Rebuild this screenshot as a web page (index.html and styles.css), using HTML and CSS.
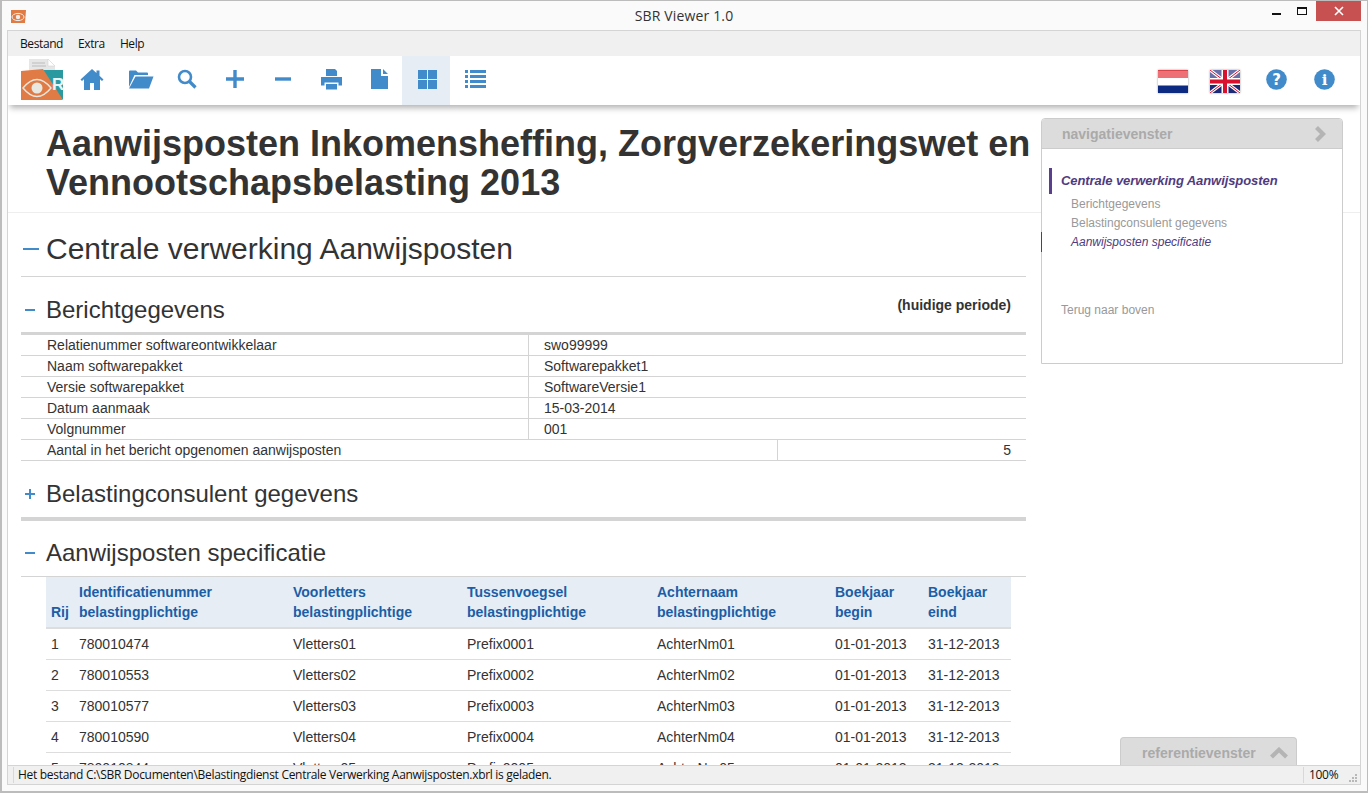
FILE: index.html
```html
<!DOCTYPE html>
<html lang="nl">
<head>
<meta charset="utf-8">
<title>SBR Viewer 1.0</title>
<link rel="stylesheet" href="styles.css">
</head>
<body>
<div class="window">
  <header class="titlebar">
    <svg class="appicon" viewBox="0 0 16 16" width="16" height="16"><path d="M1 2h15l-1 13H1z" fill="#e07b45"/><ellipse cx="8" cy="9" rx="6" ry="3.6" fill="none" stroke="#eee" stroke-width="1"/><circle cx="8" cy="9" r="2.2" fill="#eee"/></svg>
    <div class="wintitle">SBR Viewer 1.0</div>
    <div class="winctrls">
      <div class="ctl"><span class="ctl-min"></span></div>
      <div class="ctl"><span class="ctl-max"></span></div>
      <div class="ctl ctl-close"><svg viewBox="0 0 10 10" width="10" height="10"><path d="M1 1l8 8M9 1l-8 8" stroke="#fff" stroke-width="1.6"/></svg></div>
    </div>
  </header>
  <div class="client">
    <nav class="menubar"><span>Bestand</span><span>Extra</span><span>Help</span></nav>
    <div class="toolbar">
      <svg class="logo" viewBox="0 0 44 44" width="44" height="44">
        <path d="M8 1h19l7 7v8H8z" fill="#e6e6e6"/><path d="M27 1l7 7h-7z" fill="#fff" stroke="#ccc" stroke-width=".5"/>
        <path d="M11 5h13M11 8h14" stroke="#bbb" stroke-width="1.2"/>
        <rect x="22" y="12" width="20" height="29" fill="#2a9aa0"/>
        <path d="M0 13l22-2 20 31H0z" fill="#e07b45"/>
        <text x="31" y="32" class="logo-r">R</text>
        <path d="M2 30q14-17 28 0q-14 17-28 0z" fill="none" stroke="#e8e8e0" stroke-width="1.400"/>
        <circle cx="16" cy="30" r="5.500" fill="#e8e8e0"/>
      </svg>
      <div class="tool tool-home"><svg viewBox="0 0 24 22" width="24" height="22"><path d="M12 1L.5 11.500 2 13l2-1.700V22h6v-7h4v7h6V11.300L22 13l1.500-1.500-4-3.700V2.500h-3v2.500z" fill="#428bca"/></svg></div>
      <div class="tool tool-folder"><svg viewBox="0 0 26 20" width="26" height="20"><path d="M1 18V2.500q0-1 1-1h6l2 2h9q1 0 1 1V6H6.500z" fill="#428bca"/><path d="M7.500 7.500H25.500L21 19.500H1z" fill="#428bca"/></svg></div>
      <div class="tool"><svg viewBox="0 0 20 20" width="20" height="20"><circle cx="8" cy="8" r="6" fill="none" stroke="#428bca" stroke-width="2.600"/><path d="M12.500 12.500l6 6" stroke="#428bca" stroke-width="3.200"/></svg></div>
      <div class="tool"><svg viewBox="0 0 18 18" width="18" height="18"><path d="M9 0v18M0 9h18" stroke="#428bca" stroke-width="3.400"/></svg></div>
      <div class="tool"><svg viewBox="0 0 16 4" width="16" height="4"><path d="M0 2h16" stroke="#428bca" stroke-width="3.400"/></svg></div>
      <div class="tool"><svg viewBox="0 0 21 21" width="21" height="21"><path d="M5 0h9l2 2v5H5zM0 8h21v8.500h-3.500v-3h-14v3H0zM5 15h11v5.500H5z" fill="#428bca"/></svg></div>
      <div class="tool"><svg viewBox="0 0 17 20" width="17" height="20"><path d="M0 0h10v7h7v13H0zM12 0l5 5h-5z" fill="#428bca"/></svg></div>
      <div class="tool tool-on"><svg viewBox="0 0 19 19" width="19" height="19"><path d="M0 0h9v9H0zM10 0h9v9h-9zM0 10h9v9H0zM10 10h9v9h-9z" fill="#428bca"/></svg></div>
      <div class="tool"><svg viewBox="0 0 21 18" width="21" height="18"><path d="M0 0h3v3H0zM5 0h16v3H5zM0 5h3v3H0zM5 5h16v3H5zM0 10h3v3H0zM5 10h16v3H5zM0 15h3v3H0zM5 15h16v3H5z" fill="#428bca"/></svg></div>
      <div class="tool-right">
        <svg class="flag" viewBox="0 0 30 23" width="30" height="23"><rect width="30" height="8" fill="#ec7075"/><rect width="30" height="1" fill="#d8434a"/><rect y="8" width="30" height="7.500" fill="#fff"/><rect y="15.500" width="30" height="7.500" fill="#0c2a82"/></svg>
        <svg class="flag" viewBox="0 0 30 23" width="30" height="23"><rect width="30" height="23" fill="#1c2a78"/><rect width="30" height="8" fill="#6a6fa8"/><path d="M0 0l30 23M30 0L0 23" stroke="#fff" stroke-width="3"/><path d="M0 0l30 23M30 0L0 23" stroke="#d8122e" stroke-width="1"/><path d="M15 0v23M0 11.500h30" stroke="#fff" stroke-width="7"/><path d="M15 0v23M0 11.500h30" stroke="#d8122e" stroke-width="4"/></svg>
        <svg class="round round-first" viewBox="0 0 21 21" width="21" height="21"><circle cx="10.500" cy="10.500" r="10.300" fill="#428bca"/><text x="10.500" y="16" class="round-t">?</text></svg>
        <svg class="round" viewBox="0 0 21 21" width="21" height="21"><circle cx="10.500" cy="10.500" r="10.300" fill="#428bca"/><text x="10.500" y="16" class="round-t round-i">i</text></svg>
      </div>
    </div>
    <main class="content">
      <div class="doc-head"><h1>Aanwijsposten Inkomensheffing, Zorgverzekeringswet en Vennootschapsbelasting 2013</h1></div>
      <div class="doc">
        <div class="h-main"><span class="tog tog-big"><i class="bar"></i></span><span>Centrale verwerking Aanwijsposten</span></div>
        <div class="h-sec h-first"><span class="tog"><i class="bar"></i></span><span>Berichtgegevens</span><span class="period">(huidige periode)</span></div>
        <div class="kv">
          <div class="kv-row"><div class="k">Relatienummer softwareontwikkelaar</div><div class="v">swo99999</div></div>
          <div class="kv-row"><div class="k">Naam softwarepakket</div><div class="v">Softwarepakket1</div></div>
          <div class="kv-row"><div class="k">Versie softwarepakket</div><div class="v">SoftwareVersie1</div></div>
          <div class="kv-row"><div class="k">Datum aanmaak</div><div class="v">15-03-2014</div></div>
          <div class="kv-row"><div class="k">Volgnummer</div><div class="v">001</div></div>
          <div class="kv-row"><div class="k k-wide">Aantal in het bericht opgenomen aanwijsposten</div><div class="v v-num">5</div></div>
        </div>
        <div class="h-sec h-closed"><span class="tog"><i class="bar"></i><i class="bar-v"></i></span><span>Belastingconsulent gegevens</span></div>
        <div class="h-sec h-spec"><span class="tog"><i class="bar"></i></span><span>Aanwijsposten specificatie</span></div>
        <table class="spec">
          <thead><tr><th class="c0">Rij</th><th class="c1">Identificatienummer<br>belastingplichtige</th><th class="c2">Voorletters<br>belastingplichtige</th><th class="c3">Tussenvoegsel<br>belastingplichtige</th><th class="c4">Achternaam<br>belastingplichtige</th><th class="c5">Boekjaar<br>begin</th><th class="c6">Boekjaar<br>eind</th></tr></thead>
          <tbody>
            <tr><td>1</td><td>780010474</td><td>Vletters01</td><td>Prefix0001</td><td>AchterNm01</td><td>01-01-2013</td><td>31-12-2013</td></tr>
            <tr><td>2</td><td>780010553</td><td>Vletters02</td><td>Prefix0002</td><td>AchterNm02</td><td>01-01-2013</td><td>31-12-2013</td></tr>
            <tr><td>3</td><td>780010577</td><td>Vletters03</td><td>Prefix0003</td><td>AchterNm03</td><td>01-01-2013</td><td>31-12-2013</td></tr>
            <tr><td>4</td><td>780010590</td><td>Vletters04</td><td>Prefix0004</td><td>AchterNm04</td><td>01-01-2013</td><td>31-12-2013</td></tr>
            <tr><td>5</td><td>780010844</td><td>Vletters05</td><td>Prefix0005</td><td>AchterNm05</td><td>01-01-2013</td><td>31-12-2013</td></tr>
          </tbody>
        </table>
      </div>
      <aside class="navpane">
        <div class="pane-head"><span>navigatievenster</span><svg viewBox="0 0 12 16" width="12" height="16"><path d="M2.500 1.500L9 8l-6.500 6.500" fill="none" stroke="#b4b4b4" stroke-width="4.200"/></svg></div>
        <div class="nav-main">Centrale verwerking Aanwijsposten</div>
        <div class="nav-sub">Berichtgegevens</div>
        <div class="nav-sub">Belastingconsulent gegevens</div>
        <div class="nav-sub nav-sub-on">Aanwijsposten specificatie</div>
        <div class="nav-top">Terug naar boven</div>
      </aside>
      <div class="navmark"></div>
      <div class="reftab"><span>referentievenster</span><svg viewBox="0 0 18 12" width="18" height="12"><path d="M1.500 10L9 2.800l7.500 7.200" fill="none" stroke="#b4b4b4" stroke-width="4.200"/></svg></div>
    </main>
    <footer class="statusbar">
      <div class="st-msg">Het bestand C:\SBR Documenten\Belastingdienst Centrale Verwerking Aanwijsposten.xbrl is geladen.</div>
      <div class="st-zoom">100%</div>
      <svg class="grip" viewBox="0 0 10 10" width="10" height="10"><path d="M7 1h2v2H7zM4 4h2v2H4zM7 4h2v2H7zM1 7h2v2H1zM4 7h2v2H4zM7 7h2v2H7z" fill="#b8b8b8"/></svg>
    </footer>
  </div>
</div>
</body>
</html>
```
FILE: styles.css
```css
* { box-sizing: border-box; }
html, body { margin: 0; height: 100%; overflow: hidden; }
body { font-family: "Liberation Sans", Arial, sans-serif; color: #333; background: #fafafa; }
.window { height: 793px; width: 1368px; background: #fafafa; border: 1px solid #bcbcbc; border-width: 1px 1px 2px 2px; padding: 0 6px 6px 5px; display: flex; flex-direction: column; }
.titlebar { height: 29px; flex: none; display: flex; align-items: flex-start; position: relative; }
.appicon { margin: 7px 0 0 3px; }
.wintitle { position: absolute; left: 0; right: 0; top: 5px; text-align: center; font: 14px/20px "Open Sans", sans-serif; color: #333; letter-spacing: 0.15px; }
.winctrls { position: absolute; right: 0; top: 0; display: flex; align-items: stretch; height: 20px; }
.ctl { width: 26px; display: flex; align-items: center; justify-content: center; position: relative; }
.ctl-min { width: 9px; height: 2px; background: #111; margin-top: 6px; }
.ctl-max { width: 10px; height: 8px; border: 1px solid #111; border-top-width: 2px; }
.ctl-close { width: 45px; background: #c75050; margin-left: 1px; }
.client { flex: 1; min-height: 0; border: 1px solid #d4d4d4; border-bottom: 0; display: flex; flex-direction: column; background: #fff; overflow: hidden; }
.menubar { height: 25px; flex: none; background: #f0f0f0; display: flex; align-items: center; padding: 0 0 0 12px; gap: 15px; font: 12px/16px "Open Sans", sans-serif; color: #111; letter-spacing: -0.4px; }
.toolbar { height: 49px; flex: none; background: #fff; display: flex; align-items: center; padding-left: 12px; box-shadow: 0 5px 6px -2px rgba(0, 0, 0, .3); position: relative; z-index: 3; }
.logo { flex: none; margin: 0 1px 1px 1px; }
.logo-r { font: bold 17px "Liberation Sans", sans-serif; fill: #e8f4f4; }
.tool { width: 48px; height: 49px; flex: none; display: flex; align-items: center; justify-content: center; padding: 0 0 3px 2px; }
.tool-home { padding-left: 3px; }
.tool-folder { padding-left: 6px; }
.tool-on { background: #e6edf4; }
.tool-right { margin-left: auto; display: flex; align-items: center; padding-right: 25px; }
.flag { margin: 1px 0 0 22px; box-shadow: 0 0 2px rgba(0, 0, 0, .4); }
.round { margin: 0 0 3px 27px; }
.round-first { margin-left: 26px; }
.round-t { font: bold 15px "DejaVu Sans", sans-serif; fill: #fff; text-anchor: middle; }
.round-i { font-family: "DejaVu Serif", serif; }
.content { flex: 1; min-height: 0; position: relative; overflow: hidden; background: #fff; }
.doc-head { height: 108px; padding: 19px 320px 0 38px; border-bottom: 1px solid #eee; }
h1 { margin: 0; font-size: 36px; line-height: 39px; font-weight: bold; color: #333; }
.doc { padding: 0 334px 0 13px; }
.h-main { height: 64px; border-bottom: 1px solid #d4d4d4; display: flex; align-items: center; font-size: 30px; padding-top: 8px; }
.tog { position: relative; width: 25px; height: 16px; flex: none; display: block; }
.bar { position: absolute; left: 4px; top: 7px; width: 10px; height: 2px; background: #428bca; }
.bar-v { position: absolute; left: 8px; top: 3px; width: 2px; height: 10px; background: #428bca; }
.tog-big .bar { left: 2px; width: 16px; }
.h-sec { display: flex; align-items: center; font-size: 24px; position: relative; }
.h-first { height: 58px; padding-top: 11px; border-bottom: 3px solid #d4d4d4; }
.period { position: absolute; right: 15px; top: 20px; font-size: 14px; line-height: 16px; font-weight: bold; color: #333; }
.kv { font-size: 14px; }
.kv-row { display: flex; height: 21px; border-bottom: 1px solid #d4d4d4; line-height: 20px; }
.k { width: 508px; padding-left: 26px; border-right: 1px solid #d4d4d4; }
.k-wide { width: 757px; }
.v { flex: 1; padding-left: 15px; }
.v-num { text-align: right; padding-right: 15px; }
.h-closed { height: 60px; padding-top: 9px; border-bottom: 4px solid #d4d4d4; }
.h-spec { height: 56px; padding-top: 9px; border-bottom: 1px solid #d4d4d4; }
.spec { margin-left: 25px; width: 965px; border-collapse: collapse; table-layout: fixed; font-size: 14px; }
.spec th { background: #e6edf4; color: #1b5ea6; font-weight: bold; text-align: left; vertical-align: bottom; line-height: 20px; padding: 5px 0 5px 5px; height: 50px; border-bottom: 2px solid #ddd; }
.spec td { height: 31px; padding: 0 0 0 5px; border-bottom: 1px solid #ddd; }
.c0 { width: 28px; }
.c1 { width: 214px; }
.c2 { width: 174px; }
.c3 { width: 190px; }
.c4 { width: 178px; }
.c5 { width: 93px; }
.navpane { position: absolute; left: 1033px; top: 13px; width: 302px; height: 246px; background: #fff; border: 1px solid #ccc; border-radius: 4px 4px 0 0; z-index: 2; }
.pane-head { height: 30px; background: #dcdcdc; border-bottom: 1px solid #ccc; border-radius: 3px 3px 0 0; display: flex; align-items: center; justify-content: space-between; padding: 0 16px 0 20px; font-size: 14px; font-weight: bold; color: #aaa; }
.nav-main { margin: 19px 0 0 7px; height: 26px; border-left: 3px solid #5a3f8c; padding-left: 9px; line-height: 26px; font-size: 13px; font-weight: bold; font-style: italic; color: #4f3b80; letter-spacing: -0.08px; }
.nav-sub { margin-left: 29px; height: 19px; line-height: 19px; font-size: 12px; color: #999; }
.nav-main + .nav-sub { margin-top: 1px; }
.nav-sub-on { font-style: italic; color: #4f3b80; }
.nav-top { margin: 49px 0 0 19px; font-size: 12px; line-height: 19px; color: #999; }
.navmark { position: absolute; left: 1033px; top: 127px; width: 1px; height: 20px; background: #4f3b80; z-index: 3; }
.reftab { position: absolute; left: 1112px; bottom: 0; width: 177px; height: 28px; background: #dcdcdc; border: 1px solid #ccc; border-bottom: 0; border-radius: 4px 4px 0 0; display: flex; align-items: center; justify-content: space-between; padding: 2px 8px 0 21px; font-size: 14px; font-weight: bold; color: #aaa; z-index: 2; }
.statusbar { height: 20px; flex: none; background: #f0f0f0; border-top: 1px solid #d4d4d4; border-bottom: 1px solid #d4d4d4; display: flex; align-items: center; padding-left: 5px; font: 12px/16px "Open Sans", sans-serif; color: #111; letter-spacing: -0.3px; position: relative; z-index: 4; }
.st-msg { flex: 1; border-left: 1px solid #d8d8d8; padding-left: 4px; }
.st-zoom { width: 45px; border-left: 1px solid #d8d8d8; padding-left: 5px; }
.grip { margin-right: 2px; margin-top: 6px; }
```
